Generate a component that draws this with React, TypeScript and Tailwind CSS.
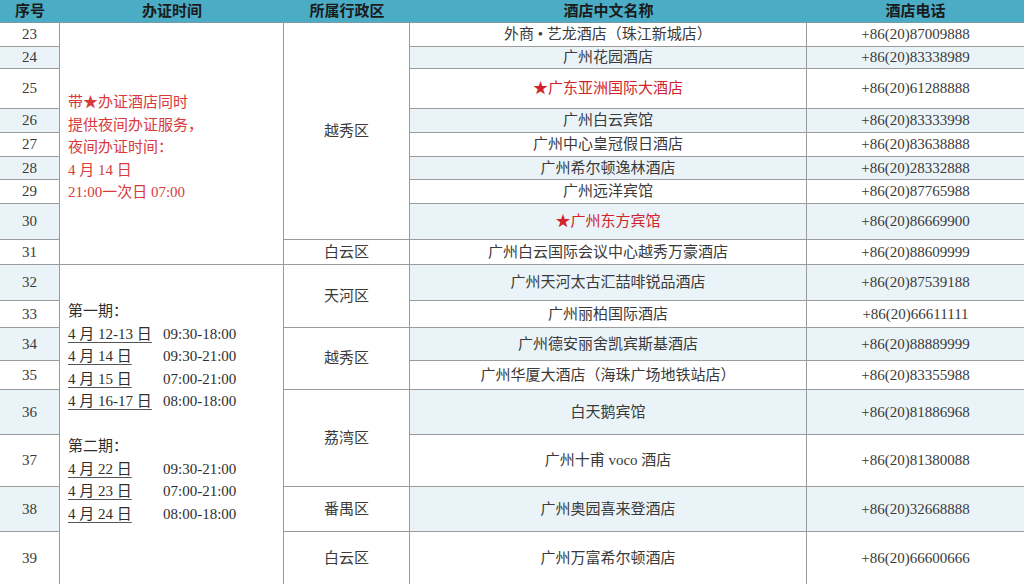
type Row = {
  no: number;
  name: string;
  star?: boolean;
  phone: string;
};

const rows: Row[] = [
  { no: 23, name: "外商 • 艺龙酒店（珠江新城店）", phone: "+86(20)87009888" },
  { no: 24, name: "广州花园酒店", phone: "+86(20)83338989" },
  { no: 25, name: "广东亚洲国际大酒店", star: true, phone: "+86(20)61288888" },
  { no: 26, name: "广州白云宾馆", phone: "+86(20)83333998" },
  { no: 27, name: "广州中心皇冠假日酒店", phone: "+86(20)83638888" },
  { no: 28, name: "广州希尔顿逸林酒店", phone: "+86(20)28332888" },
  { no: 29, name: "广州远洋宾馆", phone: "+86(20)87765988" },
  { no: 30, name: "广州东方宾馆", star: true, phone: "+86(20)86669900" },
  { no: 31, name: "广州白云国际会议中心越秀万豪酒店", phone: "+86(20)88609999" },
  { no: 32, name: "广州天河太古汇喆啡锐品酒店", phone: "+86(20)87539188" },
  { no: 33, name: "广州丽柏国际酒店", phone: "+86(20)66611111" },
  { no: 34, name: "广州德安丽舍凯宾斯基酒店", phone: "+86(20)88889999" },
  { no: 35, name: "广州华厦大酒店（海珠广场地铁站店）", phone: "+86(20)83355988" },
  { no: 36, name: "白天鹅宾馆", phone: "+86(20)81886968" },
  { no: 37, name: "广州十甫 voco 酒店", phone: "+86(20)81380088" },
  { no: 38, name: "广州奥园喜来登酒店", phone: "+86(20)32668888" },
  { no: 39, name: "广州万富希尔顿酒店", phone: "+86(20)66600666" },
];

// district cells start at these rows, with their spans
const districts: Record<number, { label: string; span: string }> = {
  23: { label: "越秀区", span: "row-span-8" },
  31: { label: "白云区", span: "row-span-1" },
  32: { label: "天河区", span: "row-span-2" },
  34: { label: "越秀区", span: "row-span-2" },
  36: { label: "荔湾区", span: "row-span-2" },
  38: { label: "番禺区", span: "row-span-1" },
  39: { label: "白云区", span: "row-span-1" },
};

const phase1 = [
  ["4 月 12-13 日", "09:30-18:00"],
  ["4 月 14 日", "09:30-21:00"],
  ["4 月 15 日", "07:00-21:00"],
  ["4 月 16-17 日", "08:00-18:00"],
];

const phase2 = [
  ["4 月 22 日", "09:30-21:00"],
  ["4 月 23 日", "07:00-21:00"],
  ["4 月 24 日", "08:00-18:00"],
];

const cell = "border-b border-r border-[#9b9b9b] flex items-center justify-center";

function Schedule({ items }: { items: string[][] }) {
  return (
    <div className="grid grid-cols-[95px_auto]">
      {items.map(([d, t]) => (
        <div key={d} className="contents">
          <span className="underline decoration-[#555] underline-offset-[3px]">{d}</span>
          <span>{t}</span>
        </div>
      ))}
    </div>
  );
}

export default function App() {
  return (
    <div
      className="w-[1024px] h-[584px] overflow-hidden bg-white text-[15px] text-[#3a3a3a]"
      style={{ fontFamily: '"Liberation Serif", "Noto Sans CJK SC", serif' }}
    >
      <div className="grid grid-cols-[60px_224px_126px_397px_217px] grid-rows-[23px_24px_22px_40px_24px_24px_23px_24px_36px_25px_36px_27px_33px_29px_45px_52px_45px_60px]">
        {["序号", "办证时间", "所属行政区", "酒店中文名称", "酒店电话"].map((h) => (
          <div
            key={h}
            className="bg-[#4bacc6] border-b border-[#7a9aa6] flex items-center justify-center font-bold text-[#1b1b1b]"
          >
            {h}
          </div>
        ))}

        {rows.map((r) => {
          const shaded = r.no % 2 === 0 ? "bg-[#eaf4f8]" : "bg-white";
          const d = districts[r.no];
          const last = r.no === 39 ? "!items-start pt-[15px]" : "";
          return (
            <div key={r.no} className="contents">
              <div className={`${cell} ${shaded} ${last}`}>{r.no}</div>

              {r.no === 23 && (
                <div className={`${cell} row-span-9 !justify-start pl-2 pt-2 bg-white`}>
                  <div className="leading-[22.5px] text-[#d9393c]">
                    <div>带★办证酒店同时</div>
                    <div>提供夜间办证服务，</div>
                    <div>夜间办证时间：</div>
                    <div>4 月 14 日</div>
                    <div>21:00一次日 07:00</div>
                  </div>
                </div>
              )}

              {r.no === 32 && (
                <div className={`${cell} row-span-8 !items-start !justify-start pl-2 pt-[35px] bg-white`}>
                  <div className="leading-[22.5px] text-[#2e2e2e]">
                    <div>第一期：</div>
                    <Schedule items={phase1} />
                    <div className="h-[22.5px]" />
                    <div>第二期：</div>
                    <Schedule items={phase2} />
                  </div>
                </div>
              )}

              {d && <div className={`${cell} ${d.span} bg-white ${last}`}>{d.label}</div>}

              <div className={`${cell} ${shaded} ${last}`}>
                {r.star ? (
                  <span className="text-[#d2232a]">★{r.name}</span>
                ) : (
                  r.name
                )}
              </div>
              <div className={`${cell} ${shaded} ${last} !border-r-0`}>{r.phone}</div>
            </div>
          );
        })}
      </div>
    </div>
  );
}
